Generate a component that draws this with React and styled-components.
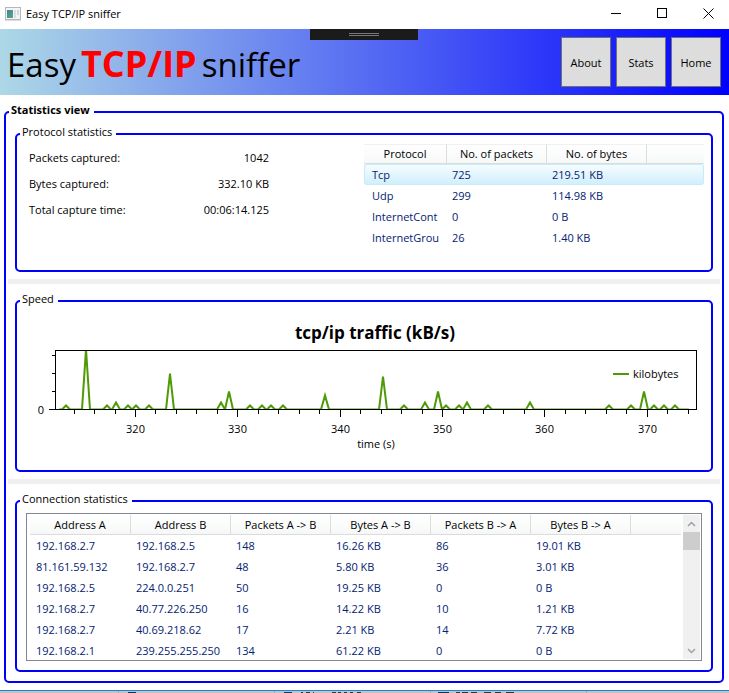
import React from "react";
import styled, { createGlobalStyle, css } from "styled-components";

const GlobalStyle = createGlobalStyle`
  *, *::before, *::after { box-sizing: border-box; }
  body { margin: 0; background: #fff; }
  body, button { font-family: "Open Sans", "Noto Sans", sans-serif; font-size: 11px; line-height: 16px; color: #000; }
`;

const Window = styled.div`
  display: flex;
  flex-direction: column;
  height: 100vh;
  min-height: 560px;
`;

const TitleBar = styled.div`
  display: flex;
  align-items: center;
  flex: none;
  height: 29px;
  padding-left: 5px;
  padding-bottom: 2px;
`;

const Caption = styled.span`
  flex: 1;
  margin-left: 5px;
`;

const CaptionButton = styled.button`
  display: grid;
  place-items: center;
  width: 46px;
  height: 27px;
  padding: 0 0 0 4px;
  border: 0;
  background: none;
`;

const Banner = styled.header`
  position: relative;
  display: flex;
  align-items: center;
  justify-content: space-between;
  flex: none;
  height: 66px;
  padding: 0 8px 0 7px;
  background: linear-gradient(90deg, #add8e6, #00f);
`;

const Brand = styled.h1`
  display: flex;
  align-items: baseline;
  gap: 5px;
  margin: 0;
  padding-top: 4px;
  font-size: 33px;
  font-weight: 400;
  line-height: 48px;
  white-space: nowrap;
`;

const BrandAccent = styled.strong`
  color: #f00;
  font-size: 36px;
  font-weight: 700;
`;

const Nav = styled.nav`
  display: flex;
  gap: 5px;
`;

const NavButton = styled.button`
  width: 50px;
  height: 50px;
  padding: 2px 0 0;
  border: 1px solid #707070;
  background: #ddd;
`;

const DebugHandle = styled.div`
  position: absolute;
  top: 0;
  left: 50%;
  display: grid;
  place-items: center;
  width: 108px;
  height: 11px;
  margin-left: -55px;
  background: #1b1b1b;

  &::after {
    content: "";
    width: 30px;
    height: 3px;
    border: solid #777;
    border-width: 1px 0;
  }
`;

const Group = styled.fieldset`
  min-width: 0;
  min-height: 0;
  margin: 0;
  padding: 0;
  border: 2px solid #00f;
  border-radius: 5px;
`;

const GroupTitle = styled.legend`
  margin-left: ${(p) => (p.$strong ? "-6px" : "3px")};
  padding: 0 4px 4px 2px;
  line-height: 12px;
  font-weight: ${(p) => (p.$strong ? 700 : 400)};
`;

const StatisticsView = styled(Group)`
  display: grid;
  grid-template-rows: minmax(0, 146fr) auto minmax(0, 179fr) auto minmax(0, 179fr);
  flex: 1;
  margin: 9px 5px 7px 4px;
  padding: 6px 9px 9px;
`;

const Splitter = styled.div`
  height: 5px;
  margin: 7px -7px 9px;
  background: #f0f0f0;
`;

const ProtocolPanel = styled.div`
  display: grid;
  grid-template-columns: 1fr 1fr;
  padding-right: 7px;
  column-gap: 7px;
`;

const Totals = styled.dl`
  max-width: 252px;
  margin: 0;
  padding: 3px 0 0 12px;
`;

const TotalRow = styled.div`
  display: flex;
  justify-content: space-between;
  line-height: 26px;

  dt, dd { margin: 0; }
`;

const DataTable = styled.table`
  width: 100%;
  table-layout: fixed;
  border-spacing: 0;
`;

const HeadCell = styled.th`
  width: ${(p) => p.$width || "auto"};
  height: 20px;
  padding: 1px 0 0;
  border: solid #dcdcdc;
  border-width: 0 1px 1px 0;
  background: linear-gradient(#fff, #f6f8f8);
  font-weight: 400;
  line-height: 18px;
  white-space: nowrap;

  &:last-child { border-right: 0; }
`;

const Cell = styled.td`
  height: 21px;
  padding: 0 5px;
  color: #042271;
  line-height: 20px;
  white-space: nowrap;

  &:first-child { padding-left: 6px; }
`;

const Row = styled.tr`
  ${(p) =>
    p.$selected &&
    css`
      td {
        border: solid #c4ecfb;
        border-width: 1px 0;
        background: linear-gradient(#f6fcff, #d1effc);
        line-height: 18px;
      }
      td:first-child { border-left-width: 1px; border-radius: 3px 0 0 3px; }
      td:last-child { border-right-width: 1px; border-radius: 0 3px 3px 0; }
    `}
`;

const ProtocolTable = styled(DataTable)`
  margin-top: 2px;

  thead th { padding: 0; border-top: 1px solid #f0f0f0; }
  td:first-child { padding: 0 0 0 8px; }
  tbody tr:first-child td:first-child { padding-left: 7px; }
`;

const Chart = styled.svg`
  display: block;
  width: 100%;
  height: 100%;
  font-family: inherit;
  font-size: 11px;
`;

const ChartTitle = styled.text`
  font-size: 17px;
  font-weight: 700;
`;

const ConnectionGroup = styled(Group)`
  display: flex;
  flex-direction: column;
`;

const ListBox = styled.div`
  display: flex;
  flex: 1;
  min-height: 0;
  margin: 4px 9px 9px;
  padding: 1px;
  overflow: hidden;
  border: 1px solid #828790;
`;

const ListViewport = styled.div`
  flex: 1;
  min-width: 0;
  padding: 0 2px;
  overflow: hidden;
`;

const ScrollBar = styled.div`
  display: flex;
  flex-direction: column;
  width: 17px;
  background: #f0f0f0;
`;

const ScrollButton = styled.button`
  display: grid;
  place-items: center;
  width: 17px;
  height: 17px;
  padding: 0;
  border: 0;
  background: none;
`;

const ScrollTrack = styled.div`
  flex: 1;
`;

const ScrollThumb = styled.div`
  height: 18px;
  background: #cdcdcd;
`;

const Backdrop = styled.footer`
  flex: none;
  height: 3px;
  border-top: 1px solid #1883d7;
  background: #c3c3c3;
  overflow: hidden;

  svg { display: block; }
`;

const totals = [
  ["Packets captured:", "1042"],
  ["Bytes captured:", "332.10 KB"],
  ["Total capture time:", "00:06:14.125"],
];

const protocols = [
  ["Tcp", "725", "219.51 KB"],
  ["Udp", "299", "114.98 KB"],
  ["InternetCont", "0", "0 B"],
  ["InternetGrou", "26", "1.40 KB"],
];

const connectionColumns = ["Address A", "Address B", "Packets A -> B", "Bytes A -> B", "Packets B -> A", "Bytes B -> A"];

const connections = [
  ["192.168.2.7", "192.168.2.5", "148", "16.26 KB", "86", "19.01 KB"],
  ["81.161.59.132", "192.168.2.7", "48", "5.80 KB", "36", "3.01 KB"],
  ["192.168.2.5", "224.0.0.251", "50", "19.25 KB", "0", "0 B"],
  ["192.168.2.7", "40.77.226.250", "16", "14.22 KB", "10", "1.21 KB"],
  ["192.168.2.7", "40.69.218.62", "17", "2.21 KB", "14", "7.72 KB"],
  ["192.168.2.1", "239.255.255.250", "134", "61.22 KB", "0", "0 B"],
];

// Each peak: horizontal position and height above the axis, in chart units.
const peaks = [
  [49, 4], [69, 60], [90, 4], [99, 7], [111, 4], [119, 4], [132, 4], [153, 36],
  [204, 7], [212, 18], [233, 4], [245, 4], [254, 4], [266, 4], [308, 14],
  [366, 33], [387, 4], [408, 7], [421, 18], [429, 4], [442, 4], [450, 7], [471, 4],
  [513, 7], [592, 4], [614, 4], [627, 18], [637, 4], [647, 4], [658, 4],
];
const BASE = 100.5;
const trafficPath =
  `M42 ${BASE}` + peaks.map(([x, h]) => `L${x - 4} ${BASE}L${x} ${BASE - h}L${x + 4} ${BASE}`).join("") + `L672 ${BASE}`;

const tickX = (t) => Math.round(118 + (t - 320) * 10.235) + 0.5;
const ticks = Array.from({ length: 31 }, (_, i) => 314 + i * 2);

function TrafficChart() {
  return (
    <Chart viewBox="0 0 694 161" role="img" aria-label="tcp/ip traffic in kilobytes per second">
      <clipPath id="plot"><rect x="39" y="42" width="640" height="59" /></clipPath>
      <ChartTitle x="358" y="30" textAnchor="middle">tcp/ip traffic (kB/s)</ChartTitle>
      <path d={trafficPath} clipPath="url(#plot)" fill="none" stroke="#4e9a06" strokeWidth="2" />
      <path d="M596 65H612" stroke="#4e9a06" strokeWidth="2" />
      <text x="616" y="69">kilobytes</text>
      <g stroke="#000" fill="none">
        <rect x="38.5" y="41.5" width="641" height="59" />
        <path d="M35 46.5H38M35 64.5H38M35 82.5H38M32 100.5H38" />
        {ticks.map((t) => (
          <path key={t} d={`M${tickX(t)} 101V${t % 10 ? 105 : 108}`} />
        ))}
      </g>
      <g textAnchor="middle">
        <text x="24" y="105">0</text>
        {ticks.filter((t) => t % 10 === 0).map((t) => (
          <text key={t} x={tickX(t)} y="124">{t}</text>
        ))}
        <text x="359" y="139">time (s)</text>
      </g>
    </Chart>
  );
}

function AppIcon() {
  return (
    <svg width="16" height="14" viewBox="0 0 16 14" aria-hidden="true">
      <defs>
        <linearGradient id="pane" x1="0" y1="0" x2="1" y2="1">
          <stop offset="0" stopColor="#3f7fa8" />
          <stop offset="1" stopColor="#5cab78" />
        </linearGradient>
      </defs>
      <rect x=".5" y=".5" width="15" height="12" fill="#f4f4f4" stroke="#b4b8ba" />
      <rect x="2" y="3" width="6" height="8" fill="url(#pane)" />
      <rect x="9" y="3" width="2" height="8" fill="#d9dfe2" />
      <rect x="12" y="3" width="2" height="5" fill="#cfd8dc" />
      <path d="M0 13.5H16" stroke="#dcdcdc" />
    </svg>
  );
}

export default function App() {
  return (
    <>
      <GlobalStyle />
      <Window>
        <TitleBar>
          <AppIcon />
          <Caption>Easy TCP/IP sniffer</Caption>
          <CaptionButton aria-label="Minimize">
            <svg width="11" height="11" stroke="#000"><path d="M0 5.5H10" /></svg>
          </CaptionButton>
          <CaptionButton aria-label="Maximize">
            <svg width="11" height="11" stroke="#000" fill="none"><rect x=".5" y=".5" width="9" height="9" /></svg>
          </CaptionButton>
          <CaptionButton aria-label="Close">
            <svg width="11" height="11" stroke="#000"><path d="M.5 .5L10.500 10.500M10.500 .5L.5 10.500" /></svg>
          </CaptionButton>
        </TitleBar>
        <Banner>
          <Brand>
            <span>Easy</span>
            <BrandAccent>TCP/IP</BrandAccent>
            <span>sniffer</span>
          </Brand>
          <DebugHandle />
          <Nav>
            <NavButton>About</NavButton>
            <NavButton>Stats</NavButton>
            <NavButton>Home</NavButton>
          </Nav>
        </Banner>
        <StatisticsView>
          <GroupTitle $strong>Statistics view</GroupTitle>
          <Group>
            <GroupTitle>Protocol statistics</GroupTitle>
            <ProtocolPanel>
              <Totals>
                {totals.map(([label, value]) => (
                  <TotalRow key={label}>
                    <dt>{label}</dt>
                    <dd>{value}</dd>
                  </TotalRow>
                ))}
              </Totals>
              <ProtocolTable>
                <thead>
                  <tr>
                    <HeadCell $width="83px">Protocol</HeadCell>
                    <HeadCell $width="100px">No. of packets</HeadCell>
                    <HeadCell $width="100px">No. of bytes</HeadCell>
                    <HeadCell />
                  </tr>
                </thead>
                <tbody>
                  {protocols.map((row, i) => (
                    <Row key={row[0]} $selected={i === 0}>
                      {row.map((value, j) => <Cell key={j}>{value}</Cell>)}
                      <Cell />
                    </Row>
                  ))}
                </tbody>
              </ProtocolTable>
            </ProtocolPanel>
          </Group>
          <Splitter />
          <Group>
            <GroupTitle>Speed</GroupTitle>
            <TrafficChart />
          </Group>
          <Splitter />
          <ConnectionGroup>
            <GroupTitle>Connection statistics</GroupTitle>
            <ListBox>
              <ListViewport>
                <DataTable>
                  <thead>
                    <tr>
                      {connectionColumns.map((name, i) => (
                        <HeadCell key={name} $width={i === 0 ? "101px" : "100px"}>{name}</HeadCell>
                      ))}
                      <HeadCell />
                    </tr>
                  </thead>
                  <tbody>
                    {connections.map((row, i) => (
                      <Row key={i}>
                        {row.map((value, j) => <Cell key={j}>{value}</Cell>)}
                        <Cell />
                      </Row>
                    ))}
                  </tbody>
                </DataTable>
              </ListViewport>
              <ScrollBar>
                <ScrollButton aria-label="Scroll up">
                  <svg width="9" height="6" fill="none" stroke="#a0a0a0" strokeWidth="1.5"><path d="M1 5L4.500 1.500L8 5" /></svg>
                </ScrollButton>
                <ScrollTrack><ScrollThumb /></ScrollTrack>
                <ScrollButton aria-label="Scroll down">
                  <svg width="9" height="6" fill="none" stroke="#a0a0a0" strokeWidth="1.5"><path d="M1 1L4.500 4.500L8 1" /></svg>
                </ScrollButton>
              </ScrollBar>
            </ListBox>
          </ConnectionGroup>
        </StatisticsView>
        <Backdrop>
          <svg width="729" height="2" aria-hidden="true">
            <path d="M118.500 0V2M274.500 0V2M430.500 0V2M586.500 0V2" stroke="#a8a8a8" />
            <path d="M128 1.500H136M284 1.500H292M438 1.500H449" stroke="#16304f" />
            <path d="M301 1.500H303M306 1.500H310M313 1.500H314M332 1.500H336M338 1.500H341M344 1.500H347M350 1.500H353M357 1.500H361M456 1.500H460M462 1.500H468M471 1.500H477M484 1.500H491M495 1.500H501M506 1.500H514" stroke="#333" />
          </svg>
        </Backdrop>
      </Window>
    </>
  );
}
